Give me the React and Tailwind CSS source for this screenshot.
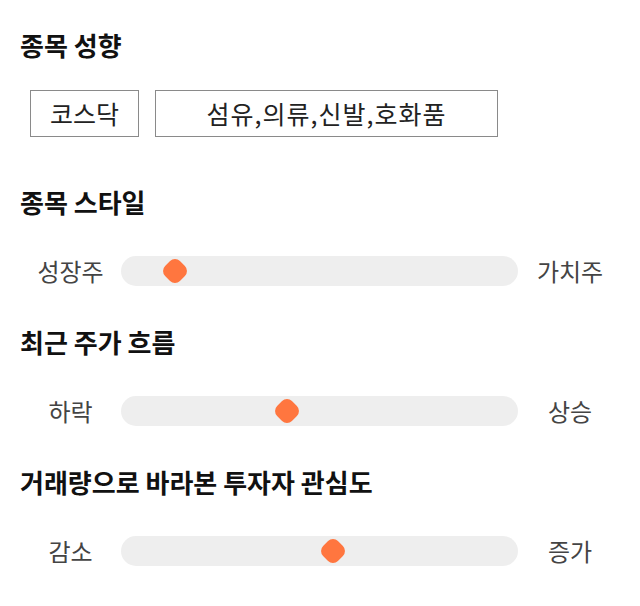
import React from 'react';

const font = { fontFamily: '"Noto Sans CJK KR", "Noto Sans", sans-serif' };

const Heading = ({ children, className = '' }) => (
  <h2 className={`text-[26px] leading-[28px] font-bold text-[#111] ${className}`}>{children}</h2>
);

const SliderRow = ({ left, right, thumb, className = '' }) => (
  <div className={`flex items-center ${className}`}>
    <span className="w-[101px] text-center text-[24px] leading-[30px] text-[#444]">{left}</span>
    <div className="relative h-[30px] w-[397px] rounded-full bg-[#eeeeee]">
      <div
        className="absolute top-1/2 h-[21px] w-[21px] -translate-x-1/2 -translate-y-1/2 rotate-45 rounded-[7px] bg-[#ff763f]"
        style={{ left: `${thumb}px` }}
      />
    </div>
    <span className="w-[102px] pl-[2px] text-center text-[24px] leading-[30px] text-[#444]">{right}</span>
  </div>
);

export default function App() {
  return (
    <div className="w-[640px] h-[606px] bg-white pl-[20px] pt-[31px]" style={font}>
      <Heading>종목 성향</Heading>
      <div className="mt-[31px] ml-[10px] flex gap-[16px]">
        <div className="flex h-[47px] w-[109px] items-center justify-center border border-[#8a8a8a] text-[25px] text-[#222]">
          코스닥
        </div>
        <div className="flex h-[47px] w-[343px] items-center justify-center border border-[#8a8a8a] text-[25px] tracking-[1px] text-[#222]">
          섬유,의류,신발,호화품
        </div>
      </div>

      <Heading className="mt-[51px]">종목 스타일</Heading>
      <SliderRow className="mt-[40px]" left="성장주" right="가치주" thumb={54} />

      <Heading className="mt-[42px]">최근 주가 흐름</Heading>
      <SliderRow className="mt-[40px]" left="하락" right="상승" thumb={166} />

      <Heading className="mt-[42px]">거래량으로 바라본 투자자 관심도</Heading>
      <SliderRow className="mt-[40px]" left="감소" right="증가" thumb={212} />
    </div>
  );
}
